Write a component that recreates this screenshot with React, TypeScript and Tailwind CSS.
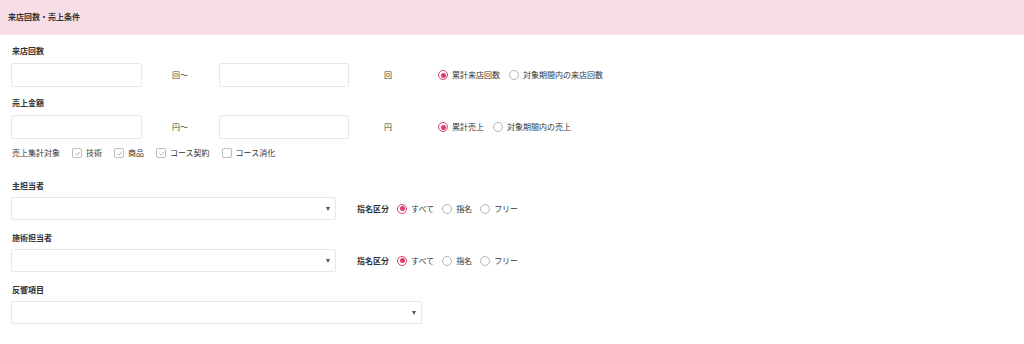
import React from "react";

const font = { fontFamily: '"Noto Sans CJK JP", "Noto Sans", sans-serif' };

function Radio({ checked, label }: { checked?: boolean; label: string }) {
  return (
    <div className="flex items-center">
      <span
        className={
          "flex h-[10px] w-[10px] items-center justify-center rounded-full border " +
          (checked ? "border-[#d8406c]" : "border-[#b5b5b5]")
        }
      >
        {checked && <span className="h-[5px] w-[5px] rounded-full bg-[#d8406c]" />}
      </span>
      <span className="ml-[4px] text-[8px] leading-[12px] text-[#333]">{label}</span>
    </div>
  );
}

function Check({ checked, label }: { checked?: boolean; label: string }) {
  return (
    <div className="flex items-center">
      <span className="flex h-[10px] w-[10px] items-center justify-center rounded-[2px] border border-[#bdbdbd] bg-white">
        {checked && (
          <svg width="7" height="7" viewBox="0 0 8 8">
            <path d="M1.5 4.2 L3.3 5.9 L6.6 2.2" fill="none" stroke="#9a9a9a" strokeWidth="0.9" />
          </svg>
        )}
      </span>
      <span className="ml-[4px] text-[8px] leading-[12px] text-[#333]">{label}</span>
    </div>
  );
}

function Label({ children, mt }: { children: React.ReactNode; mt: string }) {
  return <div className={"h-[12px] text-[8px] font-bold leading-[12px] text-[#333] " + mt}>{children}</div>;
}

function Select({ w }: { w: string }) {
  return (
    <div className={"relative h-[23px] rounded-[2px] border border-[#e8e8e8] bg-white " + w}>
      <span className="absolute right-[5px] top-[9px] h-0 w-0 border-x-[2.5px] border-t-[4px] border-x-transparent border-t-[#555]" />
    </div>
  );
}

function RangeRow({ unit1, unit2, r1, r2 }: { unit1: string; unit2: string; r1: string; r2: string }) {
  return (
    <div className="mt-[6px] flex items-center">
      <div className="h-[24px] w-[131px] rounded-[2px] border border-[#e8e8e8]" />
      <div className="w-[77px] pl-[30px] text-[8px] leading-[12px] text-[#2e5530]">{unit1}</div>
      <div className="h-[24px] w-[130px] rounded-[2px] border border-[#e8e8e8]" />
      <div className="w-[89px] pl-[35px] text-[8px] leading-[12px] text-[#2e5530]">{unit2}</div>
      <div className="flex items-center gap-[9px]">
        <Radio checked label={r1} />
        <Radio label={r2} />
      </div>
    </div>
  );
}

function StaffRow() {
  return (
    <div className="mt-[5px] flex items-center">
      <Select w="w-[325px]" />
      <span className="ml-[21px] text-[8px] font-bold leading-[12px] text-[#333]">指名区分</span>
      <div className="ml-[8px] flex items-center gap-[8px]">
        <Radio checked label="すべて" />
        <Radio label="指名" />
        <Radio label="フリー" />
      </div>
    </div>
  );
}

export default function App() {
  return (
    <div className="h-[344px] w-[1024px] bg-white" style={font}>
      <div className="flex h-[35px] items-center border-b border-[#f9e7ed] bg-[#f7dde5] pl-[8px]">
        <span className="text-[8px] font-bold leading-[12px] text-[#333]">来店回数・売上条件</span>
      </div>
      <div className="flex flex-col pl-[11px]">
        <Label mt="mt-[10px] pl-[1px]">来店回数</Label>
        <RangeRow unit1="回〜" unit2="回" r1="累計来店回数" r2="対象期間内の来店回数" />
        <Label mt="mt-[10px] pl-[1px]">売上金額</Label>
        <RangeRow unit1="円〜" unit2="円" r1="累計売上" r2="対象期間内の売上" />
        <div className="mt-[8px] flex h-[12px] items-center pl-[1px]">
          <span className="text-[8px] leading-[12px] text-[#333]">売上集計対象</span>
          <div className="ml-[12px] flex items-center gap-[12px]">
            <Check checked label="技術" />
            <Check checked label="商品" />
            <Check checked label="コース契約" />
            <Check label="コース消化" />
          </div>
        </div>
        <Label mt="mt-[21px] pl-[1px]">主担当者</Label>
        <StaffRow />
        <Label mt="mt-[12px] pl-[1px]">施術担当者</Label>
        <StaffRow />
        <Label mt="mt-[12px] pl-[1px]">反響項目</Label>
        <div className="mt-[5px]">
          <Select w="w-[411px]" />
        </div>
      </div>
    </div>
  );
}
